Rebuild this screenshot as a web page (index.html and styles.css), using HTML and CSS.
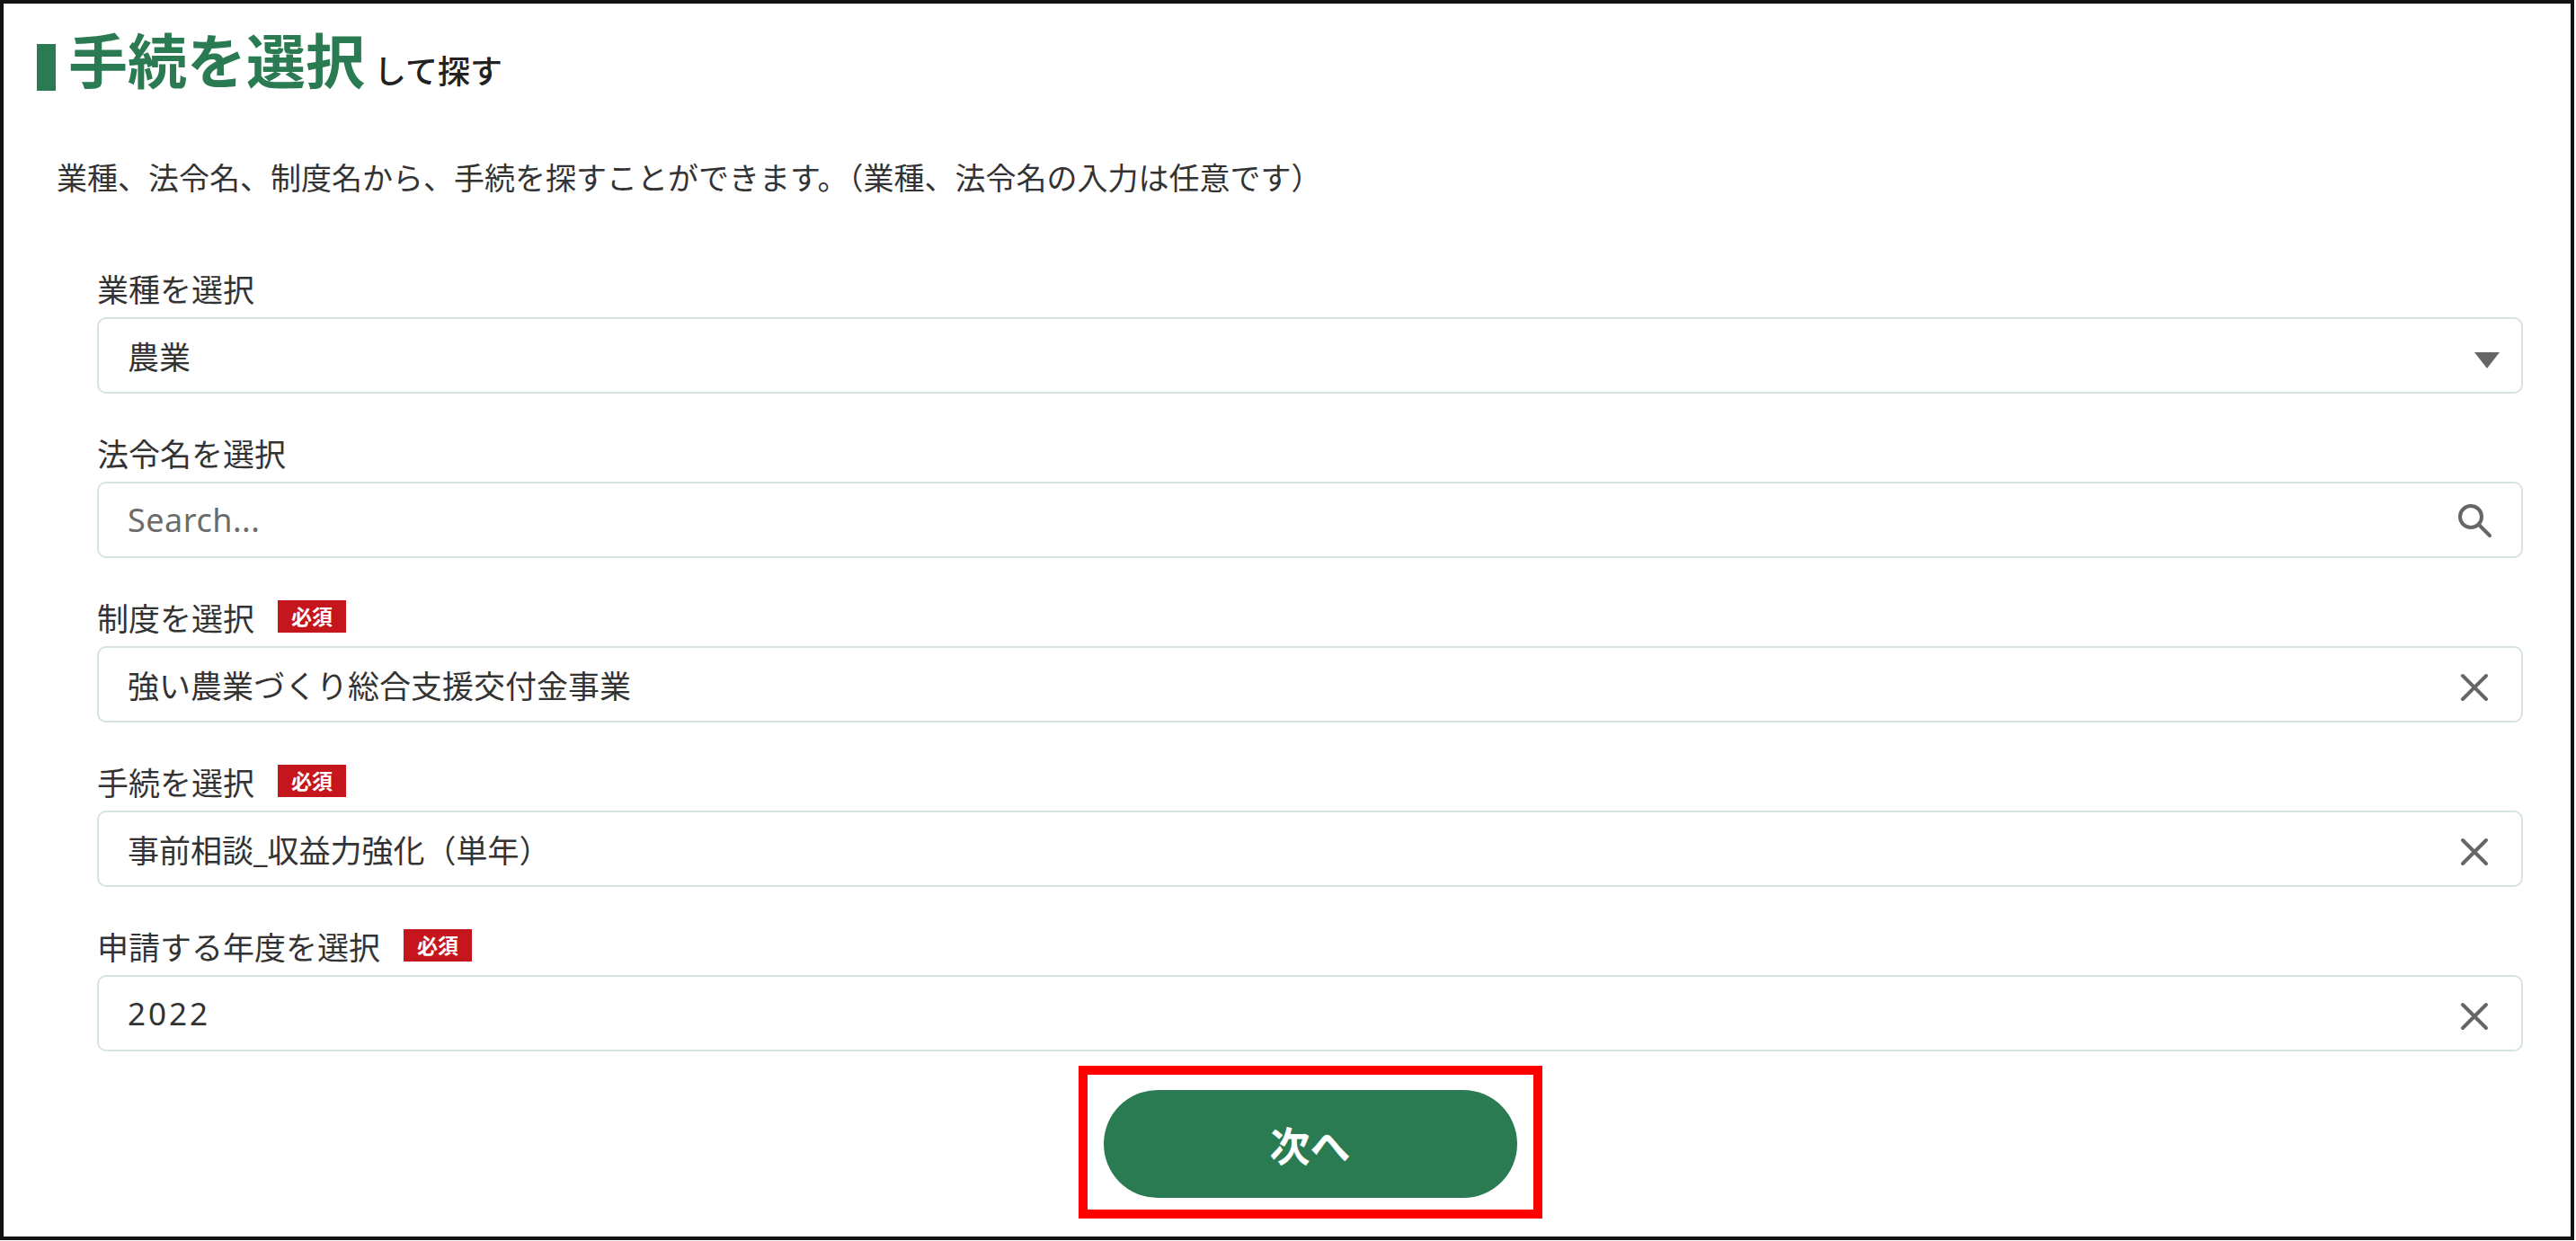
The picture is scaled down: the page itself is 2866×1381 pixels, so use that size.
FILE: index.html
```html
<!DOCTYPE html>
<html lang="ja">
<head>
    <meta charset="UTF-8">
    <meta name="viewport" content="width=device-width, initial-scale=1.0">
    <title>手続を選択して探す</title>
    <link rel="stylesheet" href="styles.css">
</head>
<body>
    <div class="frame">
        <h2 class="section-title">
            <span class="title-bar"></span>
            <span class="title-text"><span class="title-main">手続を選択</span><span class="title-sub">して探す</span></span>
        </h2>
        <p class="lead">業種、法令名、制度名から、手続を探すことができます。（業種、法令名の入力は任意です）</p>

        <div class="fields">
            <div class="field">
                <div class="field-label">業種を選択</div>
                <div class="field-box">
                    <span class="field-value">農業</span>
                    <svg class="icon icon-caret" width="28" height="18" viewBox="0 0 28 18"><polygon points="0,0 28,0 14,18" fill="#666"/></svg>
                </div>
            </div>
            <div class="field">
                <div class="field-label">法令名を選択</div>
                <div class="field-box">
                    <span class="field-value placeholder">Search...</span>
                    <svg class="icon icon-search" width="40" height="40" viewBox="0 0 40 40"><circle cx="16" cy="16" r="12" fill="none" stroke="#666" stroke-width="4"/><line x1="25" y1="25" x2="37" y2="37" stroke="#666" stroke-width="4" stroke-linecap="round"/></svg>
                </div>
            </div>
            <div class="field">
                <div class="field-label">制度を選択<span class="badge">必須</span></div>
                <div class="field-box">
                    <span class="field-value">強い農業づくり総合支援交付金事業</span>
                    <svg class="icon icon-close" width="32" height="32" viewBox="0 0 32 32"><path d="M3 3 L29 29 M29 3 L3 29" stroke="#666" stroke-width="4" stroke-linecap="round"/></svg>
                </div>
            </div>
            <div class="field">
                <div class="field-label">手続を選択<span class="badge">必須</span></div>
                <div class="field-box">
                    <span class="field-value">事前相談_収益力強化（単年）</span>
                    <svg class="icon icon-close" width="32" height="32" viewBox="0 0 32 32"><path d="M3 3 L29 29 M29 3 L3 29" stroke="#666" stroke-width="4" stroke-linecap="round"/></svg>
                </div>
            </div>
            <div class="field">
                <div class="field-label">申請する年度を選択<span class="badge">必須</span></div>
                <div class="field-box">
                    <span class="field-value num">2022</span>
                    <svg class="icon icon-close" width="32" height="32" viewBox="0 0 32 32"><path d="M3 3 L29 29 M29 3 L3 29" stroke="#666" stroke-width="4" stroke-linecap="round"/></svg>
                </div>
            </div>
        </div>

        <div class="next-area">
            <div class="highlight">
                <button class="next-button">次へ</button>
            </div>
        </div>
    </div>
</body>
</html>
```

FILE: styles.css
```css
body {
    margin: 0;
    padding: 0;
    background-color: #fff;
    font-family: "Noto Sans", "Noto Sans CJK JP", sans-serif;
    color: #333;
}
.frame {
    box-sizing: border-box;
    width: 2864px;
    height: 1380px;
    border: 4px solid #111;
    padding: 36px 53px 0 37px;
    background-color: #fff;
}
.section-title {
    display: flex;
    align-items: center;
    margin: 0;
    height: 70px;
    font-weight: normal;
}
.title-bar {
    display: block;
    width: 21px;
    height: 52px;
    background-color: #2b7b52;
    margin-right: 14px;
}
.title-text {
    line-height: 70px;
    white-space: nowrap;
}
.title-main {
    font-size: 66px;
    font-weight: bold;
    color: #2b7b52;
}
.title-sub {
    font-size: 36px;
    font-weight: 500;
    color: #222;
    margin-left: 10px;
}
.lead {
    margin: 65px 0 0 22px;
    font-size: 34px;
    line-height: 46px;
    color: #333;
}
.fields {
    margin: 76px 0 0 67px;
    display: flex;
    flex-direction: column;
    gap: 42px;
}
.field-label {
    display: flex;
    align-items: center;
    gap: 26px;
    height: 46px;
    margin-bottom: 10px;
    font-size: 35px;
    color: #333;
}
.badge {
    display: inline-block;
    background-color: #c4161c;
    color: #fff;
    font-size: 23px;
    font-weight: bold;
    line-height: 36px;
    padding: 0 15px;
}
.field-box {
    box-sizing: border-box;
    height: 85px;
    display: flex;
    align-items: center;
    justify-content: space-between;
    padding: 0 24px 0 32px;
    border: 2px solid #d6e4de;
    border-radius: 10px;
    background-color: #fff;
}
.field-value {
    font-size: 35px;
    color: #333;
}
.field-value.placeholder {
    font-size: 36px;
    letter-spacing: 0.5px;
    color: #6b6b6b;
}
.field-value.num {
    letter-spacing: 3px;
}
.icon {
    flex-shrink: 0;
}
.icon-caret {
    margin-top: 10px;
}
.icon-search {
    margin-right: 8px;
}
.icon-close {
    margin-right: 12px;
    margin-top: 6px;
}
.next-area {
    display: flex;
    justify-content: center;
    margin: 16px 0 0 67px;
}
.highlight {
    border: 10px solid #ff0000;
    padding: 17px 18px 13px;
}
.next-button {
    display: block;
    width: 460px;
    height: 120px;
    border: none;
    border-radius: 60px;
    background-color: #2b7b52;
    color: #fff;
    font-family: "Noto Sans CJK JP", sans-serif;
    font-size: 45px;
    font-weight: bold;
    cursor: pointer;
}
```
